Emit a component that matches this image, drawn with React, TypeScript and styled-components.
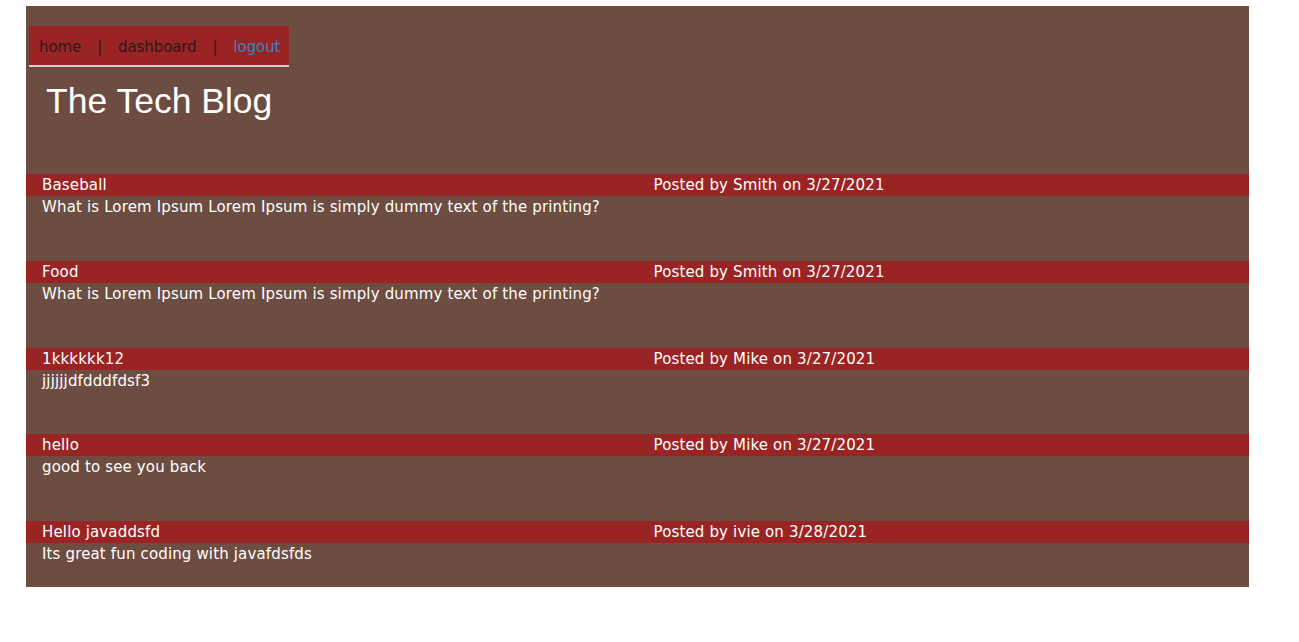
import React from "react";
import styled, { createGlobalStyle } from "styled-components";

const Global = createGlobalStyle`
  html, body { margin: 0; padding: 0; background: #ffffff; }
  body { font-family: "DejaVu Sans", Verdana, sans-serif; }
`;

const Page = styled.div`
  margin: 6px 50px 0 26px;
  width: 1223px;
  background: #6d4c41;
  padding: 20px 0 22px;
  box-sizing: border-box;
`;

const Nav = styled.nav`
  display: inline-flex;
  align-items: center;
  gap: 16px;
  margin-left: 3px;
  height: 36px;
  box-sizing: content-box;
  padding: 3px 9px 0 10px;
  background: #9a2424;
  border-bottom: 2px solid #e3cbc8;
  font-size: 15px;
  line-height: 18px;
  letter-spacing: -0.1px;
`;

const NavLink = styled.a<{ $active?: boolean }>`
  color: ${(p) => (p.$active ? "#2f86c0" : "#2a1b1b")};
  text-decoration: none;
`;

const Sep = styled.span`
  color: #2a1b1b;
`;

const Title = styled.h1`
  margin: 14px 0 53px 20px;
  font-family: "Liberation Sans", Arial, sans-serif;
  font-weight: normal;
  font-size: 35.5px;
  line-height: 40px;
  color: #ffffff;
`;

const Posts = styled.div`
  display: flex;
  flex-direction: column;
  gap: 42.75px;
`;

const Post = styled.article`
  display: flex;
  flex-direction: column;
`;

const PostHeader = styled.div`
  display: grid;
  grid-template-columns: 1fr 1fr;
  background: #9a2424;
  height: 22px;
  line-height: 22px;
  font-size: 15px;
  letter-spacing: 0.15px;
  color: #ffffff;
`;

const Cell = styled.span`
  padding-left: 16px;
`;

const PostBody = styled.p`
  margin: 0;
  padding-left: 16px;
  font-size: 15px;
  line-height: 22px;
  letter-spacing: 0.15px;
  color: #ffffff;
`;

const posts = [
  { title: "Baseball", by: "Smith", date: "3/27/2021", body: "What is Lorem Ipsum Lorem Ipsum is simply dummy text of the printing?" },
  { title: "Food", by: "Smith", date: "3/27/2021", body: "What is Lorem Ipsum Lorem Ipsum is simply dummy text of the printing?" },
  { title: "1kkkkkk12", by: "Mike", date: "3/27/2021", body: "jjjjjjdfdddfdsf3" },
  { title: "hello", by: "Mike", date: "3/27/2021", body: "good to see you back" },
  { title: "Hello javaddsfd", by: "ivie", date: "3/28/2021", body: "Its great fun coding with javafdsfds" },
];

export default function App() {
  return (
    <>
      <Global />
      <Page>
        <Nav>
          <NavLink href="#">home</NavLink>
          <Sep>|</Sep>
          <NavLink href="#">dashboard</NavLink>
          <Sep>|</Sep>
          <NavLink href="#" $active>logout</NavLink>
        </Nav>
        <Title>The Tech Blog</Title>
        <Posts>
          {posts.map((p, i) => (
            <Post key={i}>
              <PostHeader>
                <Cell>{p.title}</Cell>
                <Cell>Posted by {p.by} on {p.date}</Cell>
              </PostHeader>
              <PostBody>{p.body}</PostBody>
            </Post>
          ))}
        </Posts>
      </Page>
    </>
  );
}
